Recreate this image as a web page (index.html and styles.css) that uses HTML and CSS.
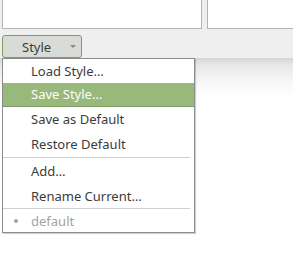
FILE: index.html
```html
<!DOCTYPE html>
<html>
<head>
<meta charset="utf-8">
<link rel="stylesheet" href="styles.css">
</head>
<body>
<div class="panes">
  <div class="pane pane-left"></div>
  <div class="pane pane-right"></div>
</div>
<div class="toolbar">
  <button class="combo"><span class="combo-label">Style</span><span class="combo-arrow"></span></button>
</div>
<div class="lower">
  <div class="menu">
    <div class="item">Load Style…</div>
    <div class="item active">Save Style…</div>
    <div class="item tall">Save as Default</div>
    <div class="item tall">Restore Default</div>
    <div class="sep"></div>
    <div class="item tall">Add…</div>
    <div class="item">Rename Current…</div>
    <div class="sep"></div>
    <div class="item disabled"><span class="bullet"></span>default</div>
  </div>
</div>
</body>
</html>
```

FILE: styles.css
```css
html, body {
  margin: 0;
  padding: 0;
}
body {
  width: 293px;
  height: 268px;
  overflow: hidden;
  background: #efefef;
  font-family: "Noto Sans", "Open Sans", sans-serif;
  font-size: 13px;
  color: #3c3c3c;
}
.panes {
  display: flex;
  gap: 5px;
  padding-left: 2px;
  height: 29px;
}
.pane {
  background: #ffffff;
  border: 1px solid #b4b4b4;
  border-top: none;
  box-sizing: border-box;
  height: 29px;
}
.pane-left {
  width: 200px;
}
.pane-right {
  flex: 1;
  margin-right: -4px;
}
.toolbar {
  padding: 6px 0 0 2px;
  height: 23px;
}
.combo {
  box-sizing: border-box;
  width: 80px;
  height: 23px;
  margin: 0;
  padding: 0;
  border: 1px solid #7f9c62;
  border-radius: 3px;
  background: #d9dbd6;
  font-family: inherit;
  font-size: 13px;
  color: #3c3c3c;
  display: flex;
  align-items: center;
}
.combo-label {
  flex: 1;
  text-align: left;
  padding-left: 19px;
}
.combo-arrow {
  width: 0;
  height: 0;
  border-left: 3px solid transparent;
  border-right: 3px solid transparent;
  border-top: 3px solid #8a8a8a;
  margin-right: 5px;
}
.lower {
  height: 210px;
  background: linear-gradient(#d4d4d4 0px, #e6e6e6 6px, #f6f6f6 22px, #ffffff 40px);
  padding-left: 2px;
}
.menu {
  width: 193px;
  box-sizing: border-box;
  background: #ffffff;
  border: 1px solid #8c8c8c;
  box-shadow: 1px 1px 1px rgba(0, 0, 0, 0.18);
}
.item {
  height: 24px;
  line-height: 24px;
  padding-left: 28px;
  white-space: nowrap;
  position: relative;
}
.item.tall {
  height: 25px;
  line-height: 25px;
}
.item.active {
  background: #99b87b;
  color: #ffffff;
  height: 23px;
  line-height: 23px;
  border-bottom: 1px solid #7f9c66;
}
.sep {
  height: 1px;
  background: #cfcfcf;
  margin: 0 4px 1px 0;
}
.item.disabled {
  color: #a3a3a3;
  height: 22px;
  line-height: 22px;
}
.bullet {
  position: absolute;
  left: 11px;
  top: 9px;
  width: 4px;
  height: 4px;
  border-radius: 50%;
  background: #a3a3a3;
}
```
